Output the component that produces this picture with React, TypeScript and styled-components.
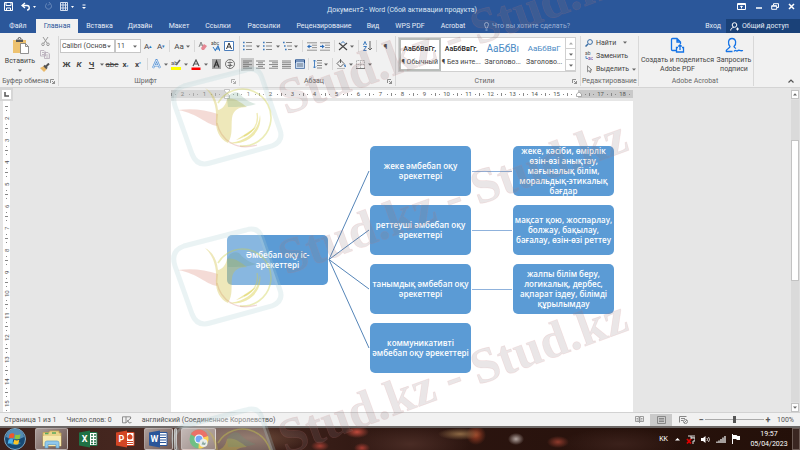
import React from "react";
import styled, { createGlobalStyle, css } from "styled-components";

const GlobalStyle = createGlobalStyle`
  * { box-sizing: border-box; }
  html, body, #root { height: 100%; }
  body { margin: 0; font-family: Roboto, "Open Sans", sans-serif; font-size: 7px; color: #444; }
  button, input, select { font: inherit; color: inherit; margin: 0; padding: 0; border: 0; background: none; }
  svg { display: block; flex: none; }
`;

/* ---------- frame ---------- */
const Window = styled.div`
  position: relative;
  height: 100vh;
  display: flex;
  flex-direction: column;
  overflow: hidden;
  background: #e6e6e6;
`;
const TitleBar = styled.header`
  display: flex;
  align-items: center;
  height: 19px;
  background: #2b579a;
  color: #fff;
`;
const QuickTools = styled.div`
  flex: 1;
  display: flex;
  align-items: center;
  gap: 8px;
  padding: 0 4px;
  margin-top: -6px;
`;
const Title = styled.h1`
  margin: 0;
  font-size: 7px;
  line-height: 12px;
  font-weight: 400;
  color: #dfe7f3;
`;
const WindowTools = styled.div`
  flex: 1;
  display: flex;
  align-items: center;
  justify-content: flex-end;
  gap: 8px;
  padding-right: 4px;
  margin-top: -6px;
`;
const PlainButton = styled.button`
  display: flex;
  align-items: center;
  justify-content: center;
`;
const TabBar = styled.nav`
  display: flex;
  height: 14px;
  background: #2b579a;
  color: #e6edf7;
`;
const Tab = styled.button<{ $active?: boolean; $w: number }>`
  width: ${(p) => p.$w}px;
  line-height: 14px;
  white-space: nowrap;
  ${(p) => p.$active && css`background: #f1f1f1; color: #2b579a;`}
`;
const TellMe = styled.label`
  flex: 1;
  display: flex;
  align-items: center;
  gap: 3px;
  padding-left: 9px;
  color: #b4c6e2;
`;
const TellInput = styled.input`
  width: 90px;
  line-height: 12px;
  outline: none;
  &::placeholder { color: #9db3d6; opacity: 1; }
`;
const Share = styled.button`
  display: flex;
  align-items: center;
  gap: 3px;
  width: 74px;
  padding-left: 4px;
  background: #1a4178;
  white-space: nowrap;
`;

/* ---------- ribbon ---------- */
const Ribbon = styled.section`
  display: flex;
  height: 55px;
  background: #f1f1f1;
  border-bottom: 1px solid #d4d4d4;
`;
const Group = styled.div<{ $w: number }>`
  flex: none;
  width: ${(p) => p.$w}px;
  margin: 3px 0 1px;
  display: flex;
  flex-direction: column;
  border-right: 1px solid #d8d8d8;
`;
const GroupBody = styled.div<{ $row?: boolean }>`
  flex: 1;
  min-height: 0;
  display: flex;
  flex-direction: ${(p) => (p.$row ? "row" : "column")};
`;
const GroupLabel = styled.div`
  display: flex;
  align-items: center;
  height: 10px;
  padding: 0 3px 0 1px;
  color: #666;
  white-space: nowrap;
  span { flex: 1; text-align: center; }
`;
const ToolRow = styled.div`
  display: flex;
  align-items: center;
  height: 14px;
  margin-top: 3px;
  padding-left: 1px;
  & + & { margin-top: 4px; }
`;
const Tool = styled.button<{ $w: number; $on?: boolean }>`
  flex: none;
  width: ${(p) => p.$w}px;
  height: 13px;
  display: flex;
  align-items: center;
  justify-content: center;
  font-size: 8px;
  line-height: 13px;
  background: ${(p) => (p.$on ? "#c8c8c8" : "none")};
  sub, sup { font-size: 5px; line-height: 0; color: #2b73b8; }
`;
const Bar = styled.span<{ $w: number }>`
  flex: none;
  width: ${(p) => p.$w}px;
  height: 12px;
  background: linear-gradient(#d8d8d8, #d8d8d8) center / 1px 100% no-repeat;
`;
const Combo = styled.div<{ $w: number }>`
  flex: none;
  display: flex;
  align-items: center;
  width: ${(p) => p.$w}px;
  height: 14px;
  padding-right: 3px;
  background: #fff;
  border: 1px solid #c6c6c6;
  select {
    flex: 1;
    min-width: 0;
    padding-left: 1px;
    appearance: none;
    outline: none;
    text-overflow: clip;
    line-height: 12px;
  }
`;
const Clipboard = styled.div`
  display: flex;
  flex-direction: column;
  justify-content: space-between;
  align-items: center;
  padding: 1px 0 4px;
`;
const BigButton = styled.button<{ $w: number }>`
  flex: none;
  width: ${(p) => p.$w}px;
  display: flex;
  flex-direction: column;
  align-items: center;
  gap: 3px;
  line-height: 9px;
  white-space: nowrap;
`;
const Gallery = styled.div`
  display: flex;
  height: 35px;
  margin: 1px 4px 0 2px;
  border: 1px solid #d0d0d0;
  background: #fff;
`;
const StyleCard = styled.button<{ $on?: boolean; $heading?: number }>`
  flex: 1;
  min-width: 0;
  display: flex;
  flex-direction: column;
  justify-content: space-around;
  align-items: center;
  padding: 2px 0;
  border: 2px solid ${(p) => (p.$on ? "#b8bcb9" : "transparent")};
  white-space: nowrap;
  line-height: 12px;
  strong {
    font-size: ${(p) => p.$heading ?? 7}px;
    font-weight: ${(p) => (p.$heading ? 400 : 500)};
    line-height: 14px;
    color: ${(p) => (p.$heading ? "#4a8ac4" : "#222")};
  }
`;
const GallerySteps = styled.div`
  width: 10px;
  display: grid;
  grid-template-rows: repeat(3, 1fr);
  border-left: 1px solid #d0d0d0;
  button { display: grid; place-items: center; border-bottom: 1px solid #d0d0d0; }
`;
const LineButton = styled.button`
  display: flex;
  align-items: center;
  gap: 3px;
  height: 14px;
  padding-left: 4px;
  white-space: nowrap;
`;
const RibbonEnd = styled.div`
  flex: 1;
  display: flex;
  align-items: flex-end;
  justify-content: flex-end;
  padding: 0 6px 4px 0;
`;

/* ---------- document ---------- */
const Workspace = styled.main`
  flex: 1;
  min-height: 0;
  display: grid;
  grid-template-columns: 13px 1fr 9px;
  grid-template-rows: 13px 1fr;
`;
const Corner = styled.div`
  display: grid;
  place-items: center;
  background: #d6d6d6;
  button { width: 9px; height: 9px; display: grid; place-items: center; background: #fff; }
`;
const RulerArea = styled.div`
  display: flex;
  justify-content: center;
  padding-top: 2px;
`;
const Ruler = styled.div`
  display: flex;
  width: 462px;
  height: 8px;
`;
const HCell = styled.div<{ $bg: string }>`
  flex: 1;
  display: flex;
  align-items: center;
  justify-content: space-between;
  background: ${(p) => p.$bg};
  font-size: 6px;
  line-height: 8px;
  color: #555;
  b { width: 6px; display: flex; justify-content: center; font-weight: 400; }
`;
const Tick = styled.i<{ $w: number; $h: number }>`
  flex: none;
  width: ${(p) => p.$w}px;
  height: ${(p) => p.$h}px;
  background: #888;
`;
const VRuler = styled.div`
  display: flex;
  flex-direction: column;
  width: 7px;
  margin-left: 3px;
  padding-top: 5px;
  min-height: 0;
  overflow: hidden;
  background: #fff;
`;
const VCell = styled.div`
  flex: none;
  height: 22px;
  display: flex;
  flex-direction: column;
  align-items: center;
  justify-content: space-between;
  font-size: 6px;
  line-height: 7px;
  color: #555;
  b { height: 6px; display: flex; justify-content: center; font-weight: 400; writing-mode: vertical-rl; rotate: 180deg; }
`;
const Canvas = styled.div`
  display: flex;
  justify-content: center;
  min-height: 0;
  overflow: hidden;
`;
const Page = styled.article`
  width: 462px;
  padding: 45px 18px 0 56px;
  background: #fff;
`;
const Diagram = styled.div`
  display: grid;
  grid-template-columns: 101px 42px 101px 42px 101px;
  align-items: center;
`;
const Column = styled.div`
  display: flex;
  flex-direction: column;
  align-self: start;
  gap: 9px;
`;
const Node = styled.div`
  height: 50px;
  display: flex;
  align-items: center;
  justify-content: center;
  text-align: center;
  border-radius: 5px;
  background: #5b9bd5;
  color: #fff;
  font: 600 8px/10px "Open Sans", "Noto Sans", sans-serif;
  white-space: pre-line;
`;
const Scroll = styled.div`
  grid-row: 1 / 3;
  grid-column: 3;
  display: flex;
  flex-direction: column;
  gap: 1px;
  padding: 2px 1px 0 0;
  background: #e0e0e0;
  button { height: 9px; display: grid; place-items: center; background: #fff; border: 1px solid #c3c3c3; }
`;
const ScrollTrack = styled.div`
  flex: 1;
  padding-top: 40px;
  background: #dadada;
`;
const ScrollThumb = styled.div`
  height: 54%;
  background: #fff;
  border: 1px solid #c3c3c3;
`;

/* ---------- status bar and taskbar ---------- */
const StatusBar = styled.footer`
  display: flex;
  align-items: center;
  height: 14px;
  padding: 0 6px 0 4px;
  background: #f1f1f1;
  border-top: 1px solid #d2d2d2;
  color: #555;
  white-space: nowrap;
`;
const StatusInfo = styled.div`
  flex: 1;
  display: flex;
  align-items: center;
  gap: 10px;
`;
const ViewButton = styled.button<{ $on?: boolean }>`
  width: 22px;
  height: 12px;
  display: grid;
  place-items: center;
  background: ${(p) => (p.$on ? "#cacaca" : "none")};
`;
const ZoomTools = styled.div`
  display: flex;
  align-items: center;
  margin-left: 3px;
  > button { width: 8px; line-height: 10px; font-size: 9px; font-weight: 700; }
  output { width: 22px; text-align: right; }
`;
const Slider = styled.input`
  appearance: none;
  width: 59px;
  height: 8px;
  background: linear-gradient(#aaa, #aaa) center / 100% 1px no-repeat;
  &::-webkit-slider-thumb { appearance: none; width: 3px; height: 7px; background: #555; }
`;
const TaskBar = styled.footer`
  display: flex;
  align-items: center;
  height: 24px;
  border-top: 2px solid #6d6866;
  color: #fff;
  background:
    radial-gradient(ellipse 12px 6px at 357px 4px, #c04a3c, transparent),
    radial-gradient(ellipse 9px 5px at 320px 18px, #a33e33, transparent),
    radial-gradient(ellipse 8px 5px at 362px 20px, #a73c32, transparent),
    radial-gradient(ellipse 22px 6px at 460px 6px, #8c6844, transparent),
    radial-gradient(ellipse 10px 10px at 476px 7px, #a14025, transparent),
    radial-gradient(ellipse 8px 6px at 516px 11px, #b3a5a0, transparent),
    radial-gradient(ellipse 11px 6px at 558px 14px, #8e3a2c, transparent),
    radial-gradient(ellipse 60px 20px at 410px 16px, #4a2c25, transparent),
    radial-gradient(ellipse 60px 14px at 250px 10px, #6c4a39, transparent),
    radial-gradient(ellipse 60px 16px at 620px 16px, #3b211b, transparent),
    linear-gradient(90deg, #3d211b, #4a2a22 25%, #2c1510 50%, #241009);
`;
const Apps = styled.div`
  flex: 1;
  display: flex;
  align-items: center;
  padding-left: 4px;
`;
const AppButton = styled.button<{ $w: number; $gap: number; $on?: boolean }>`
  width: ${(p) => p.$w}px;
  height: 22px;
  margin-left: ${(p) => p.$gap}px;
  display: grid;
  place-items: center;
  ${(p) =>
    p.$on &&
    css`
      background: linear-gradient(135deg, #ffffff8c, #ffffff38);
      border: 1px solid #ffffff66;
      border-radius: 2px;
    `}
`;
const Tray = styled.div`
  display: flex;
  align-items: center;
  gap: 5px;
`;
const Clock = styled.time`
  width: 46px;
  text-align: center;
  line-height: 10px;
`;
const Peek = styled.button`
  width: 8px;
  height: 22px;
  border: 1px solid #6b5a54;
  background: #3a2621;
`;

/* ---------- watermark ---------- */
const Watermark = styled.svg`
  position: absolute;
  top: 0;
  left: 0;
  pointer-events: none;
`;

/* ---------- small drawings ---------- */
const Ico = ({ w, h, children, c = "#555" }: { w: number; h: number; children: React.ReactNode; c?: string }) => (
  <svg width={w} height={h} viewBox={`0 0 ${w} ${h}`} fill="none" stroke={c} strokeWidth={1} aria-hidden="true">
    {children}
  </svg>
);
const Caret = ({ c = "#666" }: { c?: string }) => (
  <Ico w={4} h={3}><path d="M0 .5h4L2 2.7z" fill={c} stroke="none" /></Ico>
);
const CaretUp = ({ c = "#666" }: { c?: string }) => (
  <Ico w={4} h={3}><path d="M0 2.6h4L2 .3z" fill={c} stroke="none" /></Ico>
);
const Launcher = () => (
  <Ico w={5} h={5} c="#777"><path d="M.5 4V.5H4M2 2l2.5 2.5M4.500 2v2.500H2" strokeWidth=".8" /></Ico>
);
const Lines = ({ rows }: { rows: [number, number][] }) => (
  <Ico w={9} h={9} c="#777">
    {rows.map(([a, b], i) => <path key={i} d={`M${a} ${1 + i * 1.8}H${b}`} strokeWidth=".9" />)}
  </Ico>
);
const Bullets = ({ step = 0 }: { step?: number }) => (
  <Ico w={9} h={10}>
    {[1.5, 5, 8.5].map((y, i) => (
      <g key={y}>
        <path d={`M${i * step} ${y}h1.600`} stroke="#3a78bd" strokeWidth="1.6" />
        <path d={`M${3 + i * step} ${y}H9`} stroke="#888" />
      </g>
    ))}
  </Ico>
);
const Indent = ({ right }: { right?: boolean }) => (
  <Ico w={10} h={9}>
    <path d="M0 .8h10M5 3.200h5M5 5.600h5M0 8.200h10" stroke="#888" strokeWidth=".9" />
    <path d={right ? "M0 4.400h2.500" : "M2 4.400h2.500"} stroke="#2b6cb8" strokeWidth="1.200" />
    <path d={right ? "M4.600 4.400 2 2.400v4z" : "M0 4.400l2.600-2v4z"} fill="#2b6cb8" stroke="none" />
  </Ico>
);

const Logo = ({ y }: { y: number }) => (
  <g transform={`translate(170 ${y})`}>
    <path
      d="M14 21 76 5q12-4 16 8l18 52q4 11-8 16L40 98q-13 4-18-9L5 41Q0 26 14 21z"
      fill="#fff" fillOpacity=".28" stroke="#a9cdd2" strokeOpacity=".24" strokeWidth="5"
    />
    <g fill="none" strokeOpacity=".4">
      <path d="M48 38a28.500 28.500 0 1 1 22 43" stroke="#cdd04a" strokeWidth="1.600" />
      <path d="M47 58c4 18 20 28 40 22" stroke="#df9b9b" strokeWidth="1.300" />
      <path d="M87 48c2 10-3 18-13 23" stroke="#d9ce46" strokeWidth="1.300" />
    </g>
    <path d="M90 50c3 17-13 31-32 28 15-1 30-9 32-28zM86 62c-5 7-12 11-20 13" fill="#d9ce46" fillOpacity=".45" />
    <path d="M8 45c15-2 27 0 40 4l-1 12C35 59 29 49 8 45z" fill="#dd8f80" fillOpacity=".32" />
    <path d="M35 23c8 4 12 12 13 22 5-1 8-6 9-11 7-2 13 3 20 8-8 0-14 3-15 11-1 9 1 17-4 25-9-4-13-14-12-25 1-12-4-24-11-30z" fill="#d0c040" fillOpacity=".36" />
    <path d="M57 34c2-5 7-8 12-6 5 6 10 9 17 11-8 3-18 3-28 3z" fill="#5e9c79" fillOpacity=".22" />
  </g>
);

const cm = Array.from({ length: 21 }, (_, i) => i - 2);
const vcm = Array.from({ length: 14 }, (_, i) => i + 2);
const tabs: [string, number][] = [
  ["Файл", 36], ["Главная", 42], ["Вставка", 43], ["Дизайн", 38], ["Макет", 40], ["Ссылки", 38],
  ["Рассылки", 54], ["Рецензирование", 66], ["Вид", 32], ["WPS PDF", 42], ["Acrobat", 44],
];
const cellBg = (k: number) => {
  if (k < 0 || k > 16) return "#c9c9c9";
  if (k === 0) return "linear-gradient(90deg, #c9c9c9 50%, #fff 50%)";
  if (k === 16) return "linear-gradient(90deg, #fff 50%, #c9c9c9 50%)";
  return "#fff";
};
const groups = [
  "жеке әмбебап оқу\nәрекеттері",
  "реттеуші әмбебап оқу\nәрекеттері",
  "танымдық әмбебап оқу\nәрекеттері",
  "коммуникативті\nәмбебап оқу әрекеттері",
];
const details = [
  "жеке, кәсіби, өмірлік\nөзін-өзі анықтау,\nмағыналық білім,\nморальдық-этикалық\nбағдар",
  "мақсат қою, жоспарлау,\nболжау, бақылау,\nбағалау, өзін-өзі реттеу",
  "жалпы білім беру,\nлогикалық, дербес,\nақпарат іздеу, білімді\nқұрылымдау",
];

const Office = ({ c, l }: { c: string; l: string }) => (
  <svg width="19" height="18" viewBox="0 0 19 18" aria-hidden="true">
    <path d="M9 2.500h9v13H9z" fill="#fff" stroke={c} />
    {l === "X" && <path d="M12 5h2M15 5h2M12 8h2M15 8h2M12 11h2M15 11h2M12 13.500h2M15 13.500h2" stroke={c} strokeWidth="1.500" />}
    {l === "W" && <path d="M11 5h6M11 7.500h6M11 10h6M11 12.500h6" stroke={c} />}
    {l === "P" && <><circle cx="14" cy="7" r="2.500" fill={c} /><path d="M14 7V4M11 11.500h6M11 13.500h6" stroke={c} /></>}
    <path d="M0 2.500 11 .5v17L0 15.500z" fill={c} />
    <text x="5.500" y="12" fontSize="9" fontWeight="700" fill="#fff" textAnchor="middle">{l}</text>
  </svg>
);

export default function App() {
  return (
    <Window>
      <GlobalStyle />
      <TitleBar>
        <QuickTools>
          <PlainButton aria-label="Сохранить">
            <Ico w={9} h={9} c="#fff"><path d="M.5.5h8v8h-8zM2 .5v3h5v-3M2.500 8.500V6h4v2.500" /></Ico>
          </PlainButton>
          <PlainButton aria-label="Отменить">
            <Ico w={15} h={9} c="#fff"><path d="M4 1 1 3.500 4 6M1.500 3.500H6c3 0 3 4.500 0 4.500" strokeWidth="1.400" /><path d="M12 4h3l-1.500 2z" fill="#fff" stroke="none" /></Ico>
          </PlainButton>
          <PlainButton aria-label="Повторить">
            <Ico w={8} h={9} c="#6a8abc"><path d="M3 1.500a3 3 0 1 0 3 0M4 3.500l2-2L5 0" /></Ico>
          </PlainButton>
          <PlainButton aria-label="Таблица">
            <Ico w={14} h={10} c="#d6e0f0"><path d="M.5.5h7v8h-7zM.5 3h7M.5 6h7M3 .5v8M5.500.5v8" /><path d="M11 4h3l-1.500 2z" fill="#fff" stroke="none" /></Ico>
          </PlainButton>
          <PlainButton aria-label="Настройка панели">
            <Ico w={4} h={6} c="#fff"><path d="M.5 1h3" /><path d="M0 3h4L2 5z" fill="#fff" stroke="none" /></Ico>
          </PlainButton>
        </QuickTools>
        <Title>Документ2 - Word (Сбой активации продукта)</Title>
        <WindowTools>
          <PlainButton aria-label="Параметры ленты">
            <Ico w={9} h={7} c="#fff"><path d="M.5.5h8v6h-8zM.5 1.500h8M4.500 5.500V3M3.300 4l1.200-1.200L5.700 4" /></Ico>
          </PlainButton>
          <PlainButton aria-label="Свернуть"><Ico w={9} h={7} c="#fff"><path d="M2 5h6" strokeWidth="1.500" /></Ico></PlainButton>
          <PlainButton aria-label="Окно"><Ico w={8} h={7} c="#fff"><path d="M2.500 2V.7h5v3.800H6M.7 2.700h5v3.600h-5zM.7 3.200h5" /></Ico></PlainButton>
          <PlainButton aria-label="Закрыть"><Ico w={9} h={7} c="#fff"><path d="M2 1l5 5M7 1 2 6" strokeWidth="1.500" /></Ico></PlainButton>
        </WindowTools>
      </TitleBar>
      <TabBar>
        {tabs.map(([name, w]) => <Tab key={name} $w={w} $active={name === "Главная"}>{name}</Tab>)}
        <TellMe>
          <Ico w={5} h={9} c="#b4c6e2"><path d="M1.700 6C1.700 4.500.5 4 .5 2.500a2 2 0 0 1 4 0C4.500 4 3.300 4.500 3.300 6zM1.500 8h2" strokeWidth=".8" /></Ico>
          <TellInput aria-label="Помощник" placeholder="Что вы хотите сделать?" />
        </TellMe>
        <Tab $w={26}>Вход</Tab>
        <Share>
          <Ico w={9} h={9} c="#fff"><circle cx="4.500" cy="3" r="2.300" /><path d="M.7 8.500c0-2 1.500-3 3-3M6 7h3M7.500 5.500v3" /></Ico>
          Общий доступ
        </Share>
      </TabBar>

      <Ribbon>
        <Group $w={59}>
          <GroupBody $row>
            <BigButton $w={40}>
              <Ico w={17} h={18}>
                <path d="M1 4h13v13H1z" fill="#edc270" stroke="none" />
                <path d="M4 3.500h7V6H4z" fill="#555" stroke="none" /><path d="M6 3a1.500 1.500 0 0 1 3 0" />
                <path d="M8.500 7.500h5l3 3v7h-8zM13.500 7.500v3h3" fill="#fff" stroke="#777" strokeWidth=".8" />
              </Ico>
              Вставить
              <Caret />
            </BigButton>
            <Clipboard>
              <PlainButton aria-label="Вырезать"><Ico w={9} h={9} c="#999"><path d="M2 0l4 6M7 0 3 6" /><circle cx="2" cy="7.300" r="1.300" /><circle cx="7" cy="7.300" r="1.300" /></Ico></PlainButton>
              <PlainButton aria-label="Копировать"><Ico w={10} h={9} c="#b5a9b7"><path d="M.5.5H4l1.500 1.500v4h-5zM4.500 2.500H8L9.500 4v4.500h-5zM6 5h2.500M6 7h2.500M2 2.500h2M2 4.500h2" strokeWidth=".8" /></Ico></PlainButton>
              <PlainButton aria-label="Формат по образцу"><Ico w={10} h={9}><path d="M0 5l4-2 3 3-3 3z" fill="#e9b96a" stroke="none" /><path d="M4 2.500 7 5.500M6 3.500 9 .5" stroke="#555" strokeWidth="2" /></Ico></PlainButton>
            </Clipboard>
          </GroupBody>
          <GroupLabel><span>Буфер обмена</span><Launcher /></GroupLabel>
        </Group>

        <Group $w={181}>
          <GroupBody>
            <ToolRow>
              <Combo $w={55}><select aria-label="Шрифт"><option>Calibri (Основ</option></select><Caret /></Combo>
              <Combo $w={26}><select aria-label="Размер"><option>11</option></select><Caret /></Combo>
              <Tool $w={14}>A<sup>▴</sup></Tool>
              <Tool $w={12}>A<sup>▾</sup></Tool>
              <Bar $w={5} />
              <Tool $w={20}>Aa&nbsp;<Caret /></Tool>
              <Bar $w={4} />
              <Tool $w={13} aria-label="Очистить формат">
                <Ico w={9} h={10}><path d="M1 6 3 1l2 5M2 4h2.500" stroke="#888" /><path d="M3 7l3-4 3 2-3 4H4z" fill="#e58793" stroke="none" /></Ico>
              </Tool>
              <Tool $w={13} aria-label="Фонетика">
                <Ico w={9} h={11}><text x="0" y="4" fontSize="5" fill="#444" stroke="none">abc</text><path d="M4 10l3-5 2 5M5 8h3.500" stroke="#2f78c4" strokeWidth="1.200" /><path d="M2 6l2 3" stroke="#2f78c4" /></Ico>
              </Tool>
              <Tool $w={13} aria-label="Граница знака">
                <Ico w={10} h={10}><path d="M.5.5h9v9h-9z" stroke="#4a7dbb" fill="#fff" /><path d="M2.500 8 5 2l2.500 6M3.500 6h3" stroke="#333" /></Ico>
              </Tool>
            </ToolRow>
            <ToolRow>
              <Tool $w={13}><b>Ж</b></Tool>
              <Tool $w={12}><b><i>К</i></b></Tool>
              <Tool $w={13}><b><u>Ч</u></b></Tool>
              <Tool $w={7} aria-label="Подчеркивание"><Caret /></Tool>
              <Tool $w={14}><s>abc</s></Tool>
              <Tool $w={13}><b>x</b><sub>₂</sub></Tool>
              <Tool $w={12}><b>x</b><sup>²</sup></Tool>
              <Bar $w={6} />
              <Tool $w={12} aria-label="Эффекты"><Ico w={9} h={10}><path d="M1 9 4.500 1 8 9M2.500 6.500h4" stroke="#5b95d5" strokeWidth="2.200" /><path d="M1 9 4.500 1 8 9M2.500 6.500h4" stroke="#fff" strokeWidth=".7" /></Ico></Tool>
              <Tool $w={7} aria-label="Список эффектов"><Caret /></Tool>
              <Tool $w={13} aria-label="Цвет выделения"><Ico w={10} h={11}><path d="M0 8h10v3H0z" fill="#ff0" stroke="none" /><text x="0" y="6" fontSize="6" fill="#555" stroke="none">ab</text><path d="M5 6 9 1" stroke="#666" strokeWidth="1.500" /></Ico></Tool>
              <Tool $w={7} aria-label="Список цветов"><Caret /></Tool>
              <Tool $w={14} aria-label="Цвет текста"><Ico w={10} h={11}><path d="M.5 8.500h9v2.500h-9z" fill="#f00" stroke="none" /><path d="M2 7 5 1l3 6M3 5h4" stroke="#555" strokeWidth="1.200" /></Ico></Tool>
              <Tool $w={6} aria-label="Цвета текста"><Caret /></Tool>
              <Tool $w={14} aria-label="Затенение"><Ico w={9} h={10}><path d="M0 0h9v10H0z" fill="#a5a5a5" stroke="none" /><path d="M2 8.500 4.500 2 7 8.500M3 6h3" stroke="#333" strokeWidth="1.200" /></Ico></Tool>
              <Tool $w={13} aria-label="Знак в круге"><Ico w={10} h={10}><circle cx="5" cy="5" r="4.500" strokeWidth=".8" /><path d="M5 1.500v1M2.500 3.500h5M3.500 5H6L5 6.500V8H4M2.500 6.500h5" strokeWidth=".8" /></Ico></Tool>
            </ToolRow>
          </GroupBody>
          <GroupLabel><span>Шрифт</span><Launcher /></GroupLabel>
        </Group>

        <Group $w={156}>
          <GroupBody>
            <ToolRow>
              <Tool $w={13} aria-label="Маркеры"><Bullets /></Tool><Tool $w={7} aria-label="Виды маркеров"><Caret /></Tool>
              <Tool $w={13} aria-label="Нумерация"><Bullets /></Tool><Tool $w={7} aria-label="Виды нумерации"><Caret /></Tool>
              <Tool $w={12} aria-label="Многоуровневый список"><Bullets step={1} /></Tool><Tool $w={6} aria-label="Виды списков"><Caret /></Tool>
              <Bar $w={6} />
              <Tool $w={13} aria-label="Уменьшить отступ"><Indent /></Tool>
              <Tool $w={13} aria-label="Увеличить отступ"><Indent right /></Tool>
              <Bar $w={6} />
              <Tool $w={12} aria-label="Азиатская верстка"><Ico w={10} h={10}><path d="M1 2l8 7M9 2 1 9" stroke="#444" strokeWidth="1.100" /><path d="M3 2.500 5 .5l2 2" stroke="#3a78bd" /></Ico></Tool>
              <Tool $w={6} aria-label="Виды верстки"><Caret /></Tool>
              <Bar $w={6} />
              <Tool $w={13} aria-label="Сортировка"><Ico w={9} h={10}><path d="M.5 4 2 .5 3.500 4M.5 5.500h3L.5 9.500h3" stroke="#3a78bd" /><path d="M7 0v9M5 7l2 2 2-2" stroke="#666" /></Ico></Tool>
              <Bar $w={5} />
              <Tool $w={13}>¶</Tool>
            </ToolRow>
            <ToolRow>
              <Tool $w={13} $on aria-label="По левому краю"><Lines rows={[[0, 9], [0, 6], [0, 9], [0, 6], [0, 9]]} /></Tool>
              <Tool $w={13} aria-label="По центру"><Lines rows={[[0, 9], [2, 7], [0, 9], [2, 7], [0, 9]]} /></Tool>
              <Tool $w={13} aria-label="По правому краю"><Lines rows={[[0, 9], [3, 9], [0, 9], [3, 9], [0, 9]]} /></Tool>
              <Tool $w={13} aria-label="По ширине"><Lines rows={[[0, 9], [0, 9], [0, 9], [0, 9], [0, 9]]} /></Tool>
              <Tool $w={13} aria-label="Распределенное"><Ico w={10} h={10} c="#555"><path d="M.5.5h9v9h-9z" fill="#c7d8ee" stroke="#6585b0" /><path d="M.5 1v3M9.500 1v3M1 2h8" stroke="#28508a" /><path d="M2 5h6M2 7h6" stroke="#678" /></Ico></Tool>
              <Bar $w={5} />
              <Tool $w={12} aria-label="Интервал"><Ico w={9} h={10}><path d="M4 1.500h5M4 4h5M4 6.500h5M4 9h5" stroke="#888" /><path d="M1.500 1v8M0 2.500 1.500 1 3 2.500M0 7.500 1.500 9 3 7.500" stroke="#3a78bd" strokeWidth=".9" /></Ico></Tool>
              <Tool $w={6} aria-label="Интервалы"><Caret /></Tool>
              <Bar $w={6} />
              <Tool $w={12} aria-label="Заливка"><Ico w={10} h={10}><path d="M1 4.500 4.500 1 8 4.500 4.500 8zM4.500 4V0" strokeWidth=".9" /><path d="M8.500 5.500 9.500 8" stroke="#3a78bd" strokeWidth="1.500" /><path d="M1 9.500h8" stroke="#bbb" /></Ico></Tool>
              <Tool $w={7} aria-label="Цвета заливки"><Caret /></Tool>
              <Tool $w={13} aria-label="Границы"><Ico w={9} h={9} c="#aaa"><path d="M.5.5h8v8h-8zM4.500.5v8M.5 4.500h8" strokeDasharray="1 .6" /><path d="M0 8.500h9" stroke="#777" /></Ico></Tool>
              <Tool $w={6} aria-label="Виды границ"><Caret /></Tool>
            </ToolRow>
          </GroupBody>
          <GroupLabel><span>Абзац</span><Launcher /></GroupLabel>
        </Group>

        <Group $w={185}>
          <GroupBody>
            <Gallery>
              <StyleCard $on><strong>АаБбВвГг,</strong>¶ Обычный</StyleCard>
              <StyleCard><strong>АаБбВвГг,</strong>¶ Без инте...</StyleCard>
              <StyleCard $heading={10}><strong>АаБбВı</strong>Заголово...</StyleCard>
              <StyleCard $heading={8}><strong>АаБбВвГ</strong>Заголово...</StyleCard>
              <GallerySteps>
                <button aria-label="Вверх"><CaretUp c="#aaa" /></button>
                <button aria-label="Вниз"><Caret /></button>
                <button aria-label="Все стили"><Caret /></button>
              </GallerySteps>
            </Gallery>
          </GroupBody>
          <GroupLabel><span>Стили</span><Launcher /></GroupLabel>
        </Group>

        <Group $w={58}>
          <GroupBody>
            <LineButton><Ico w={8} h={8} c="#3a6ea5"><circle cx="5" cy="3" r="2.400" /><path d="M3 5 .5 7.500" strokeWidth="1.500" /></Ico>Найти&nbsp;&nbsp;<Caret /></LineButton>
            <LineButton><Ico w={8} h={9}><text x="0" y="4" fontSize="5" fill="#555" stroke="none">ab</text><text x="3" y="9" fontSize="5" fill="#7146a3" stroke="none">ac</text><path d="M1 5v2.500h2" stroke="#3a78bd" strokeWidth=".8" /></Ico>Заменить</LineButton>
            <LineButton><Ico w={8} h={8} c="#777"><path d="M2.500.8v6l1.500-1.300 1 2 1-.5-1-2h2z" strokeWidth=".8" /></Ico>Выделить<Caret /></LineButton>
          </GroupBody>
          <GroupLabel><span>Редактирование</span></GroupLabel>
        </Group>

        <Group $w={115}>
          <GroupBody $row>
            <BigButton $w={77}>
              <Ico w={15} h={17} c="#1473e6"><path d="M6 14.500H2.500q-1 0-1-1v-10q0-1 1-1H7l3.500 3.500v2M7 2.500V6h3.500M8 11.500H6.500V16h7v-4.500H12M10 14V9M8.300 10.500 10 8.800l1.700 1.700" strokeWidth="1.300" /></Ico>
              <span>Создать и поделиться<br />Adobe PDF</span>
            </BigButton>
            <BigButton $w={36}>
              <Ico w={19} h={17} c="#1473e6"><path d="M1 15.500h6.500M1 15.500c0-3 4-3 4-5C3 9 2.500 2.500 7 2.500s4.500 6 2 8c0 1 1 1.500 2 2M9 15.500c2-3 2 1 4-1 1-1 2 1 5 0" strokeWidth="1.300" /></Ico>
              <span>Запросить<br />подписи</span>
            </BigButton>
          </GroupBody>
          <GroupLabel><span>Adobe Acrobat</span></GroupLabel>
        </Group>
        <RibbonEnd><PlainButton aria-label="Свернуть ленту"><Ico w={6} h={4}><path d="M.5 3.500 3 1l2.500 2.500" strokeWidth="1.200" /></Ico></PlainButton></RibbonEnd>
      </Ribbon>

      <Workspace>
        <Corner><button aria-label="Табуляция"><Ico w={5} h={5}><path d="M1 0v4h4" strokeWidth="1.500" /></Ico></button></Corner>
        <RulerArea>
          <Ruler>
            {cm.map((k) => (
              <HCell key={k} $bg={cellBg(k)}>
                <Tick $w={1} $h={3} /><Tick $w={1} $h={1} />
                <b>
                  {k === 0 ? (
                    <Ico w={6} h={10} c="#999"><path d="M.5.500h5v1.500L3 4.500.5 2zM3 4.500l2.500 2v3h-5v-3zM.5 7h5" fill="#fff" strokeWidth=".8" /></Ico>
                  ) : k === 16 ? (
                    <Ico w={6} h={6} c="#999"><path d="M.5 5.500V3L3 1l2.500 2v2.500z" fill="#fff" strokeWidth=".8" /></Ico>
                  ) : Math.abs(k)}
                </b>
                <Tick $w={1} $h={1} /><span />
              </HCell>
            ))}
          </Ruler>
        </RulerArea>
        <Scroll>
          <button aria-label="Прокрутить вверх"><CaretUp /></button>
          <ScrollTrack><ScrollThumb /></ScrollTrack>
          <button aria-label="Прокрутить вниз"><Caret /></button>
        </Scroll>
        <VRuler>
          {vcm.map((k) => (
            <VCell key={k}><Tick $w={3} $h={1} /><Tick $w={1} $h={1} /><b>{k}</b><Tick $w={1} $h={1} /><span /></VCell>
          ))}
        </VRuler>
        <Canvas>
          <Page>
            <Diagram>
              <Node>{"Әмбебап оқу іс-\nәрекеттері"}</Node>
              <Ico w={42} h={227} c="#5585b8">
                <path d="M1 113.500 41 25M1 113.500 41 84M1 113.500 41 143M1 113.500 41 202" />
              </Ico>
              <Column>{groups.map((t) => <Node key={t}>{t}</Node>)}</Column>
              <Ico w={42} h={227} c="#8fb2dc"><path d="M1 25.500h40M1 84.500h40M1 143.500h40" /></Ico>
              <Column>{details.map((t) => <Node key={t}>{t}</Node>)}</Column>
            </Diagram>
          </Page>
        </Canvas>
      </Workspace>

      <StatusBar>
        <StatusInfo>
          <span>Страница 1 из 1</span>
          <span>Число слов: 0</span>
          <Ico w={10} h={8} c="#777"><path d="M.5.8h3.500v6H.5zM4 .8h4.500v2M4 6.800l5-5M5.500 4l1.500 3 2.500-.5" strokeWidth=".8" /></Ico>
          <span>английский (Соединенное Королевство)</span>
        </StatusInfo>
        <ViewButton aria-label="Режим чтения"><Ico w={9} h={7} c="#888"><path d="M.5.500h3.500v5H.500zM5 .5h3.500v5H5zM4.500.5v6.500M1.500 2.500h1.500M6 2.500h1.500M1.500 4h1.500M6 4h1.500" strokeWidth=".8" /></Ico></ViewButton>
        <ViewButton $on aria-label="Разметка страницы"><Ico w={9} h={8} c="#888"><path d="M.5.5h8v7h-8zM2 2.500h5M2 4h5M2 5.500h5" /></Ico></ViewButton>
        <ViewButton aria-label="Веб-документ"><Ico w={9} h={8} c="#888"><path d="M.5 6.500v-6h7M2 2.500h4M2 4.500h2" /><circle cx="6.500" cy="5.500" r="2" /><path d="M5 7l3-3" /></Ico></ViewButton>
        <ZoomTools>
          <button aria-label="Уменьшить">−</button>
          <Slider type="range" aria-label="Масштаб" min={0} max={200} defaultValue={100} />
          <button aria-label="Увеличить">+</button>
          <output>100%</output>
        </ZoomTools>
      </StatusBar>

      <TaskBar>
        <Apps>
          <AppButton $w={22} $gap={0} aria-label="Пуск">
            <svg width="22" height="22" viewBox="0 0 22 22">
              <circle cx="11" cy="11" r="10.500" fill="#174a75" stroke="#7fa9c5" />
              <path d="M2 9a9 8 0 0 1 18 0q-9 5-18 0z" fill="#6fa8cf" fillOpacity=".7" />
              <path d="M5 15a8 6 0 0 0 12 0q-6-3-12 0z" fill="#40b7e8" fillOpacity=".6" />
              <path d="M5.500 6.500q2.500-2 5-.6l-1 4.300q-2.500-1-4.800.3z" fill="#f0582b" />
              <path d="M11.500 6.500q2.500 1.200 5-.2l-1 4.500q-2.500 1.200-5-.2z" fill="#8cc63e" />
              <path d="M4.500 11.700q2.500-1.500 4.800-.3l-1 4.200q-2.300-1-4.600.2z" fill="#4ab2ec" />
              <path d="M10.300 11.800q2.500 1.200 5 0l-1 4.200q-2.500 1.200-5-.2z" fill="#fdc525" />
            </svg>
          </AppButton>
          <AppButton $w={33} $gap={9} $on aria-label="Проводник">
            <svg width="20" height="19" viewBox="0 0 20 19">
              <path d="M1 5V2.500h6L8 1h9v2h2v13H1z" fill="#e9d28a" stroke="#c5a651" strokeWidth=".8" />
              <path d="M3 3.500h3.500M10 3h4" stroke="#59a95c" strokeWidth="1.500" />
              <path d="M1 6h18v10H1z" fill="#f7e9ad" />
              <path d="M3 18v-5q0-2 2-2h10q2 0 2 2v5h-3v-3.500H6V18z" fill="#8fc8ec" stroke="#609dc8" strokeWidth=".7" />
            </svg>
          </AppButton>
          <AppButton $w={30} $gap={5} aria-label="Excel"><Office c="#1f7145" l="X" /></AppButton>
          <AppButton $w={30} $gap={7} aria-label="PowerPoint"><Office c="#d24625" l="P" /></AppButton>
          <AppButton $w={29} $gap={4} $on aria-label="Word"><Office c="#2a5599" l="W" /></AppButton>
          <AppButton $w={3} $gap={1} $on aria-label="Окна Word" />
          <AppButton $w={35} $gap={4} $on aria-label="Chrome">
            <svg width="20" height="20" viewBox="0 0 20 20">
              <circle cx="10" cy="10" r="9.500" fill="#3aa757" />
              <path d="M10 10 1.800 5.200A9.500 9.500 0 0 1 18.200 5.200L19 8z" fill="#e33b2e" />
              <path d="M10 10l9-3A9.500 9.500 0 0 1 9.500 19.500z" fill="#fbc116" />
              <circle cx="10" cy="10" r="4.500" fill="#fff" /><circle cx="10" cy="10" r="3.500" fill="#4285f4" />
              <circle cx="14.500" cy="14" r="4" fill="#e2e8e4" /><path d="M12.500 15.500 14 12l1 2 2-.5-1 2.500z" fill="#628b80" />
            </svg>
          </AppButton>
        </Apps>
        <Tray>
          <span>KK</span>
          <PlainButton aria-label="Скрытые значки"><Ico w={8} h={4}><path d="M2 3.500h5L4.500 1z" fill="#fff" stroke="none" /></Ico></PlainButton>
          <Ico w={9} h={11} c="#ddd"><path d="M2 2h3v3M6 1v3M8 1v3M5 4h4v3H7v3" /><path d="M1 5l4 4.500M5 5 1 9.500" stroke="#e00000" strokeWidth="1.800" /></Ico>
          <Ico w={11} h={9} c="#fff"><path d="M1 3h2l2.500-2v7L3 6H1z" fill="#fff" stroke="none" /><path d="M7 3q1 1.500 0 3M8.500 2q2 2.500 0 5" strokeWidth=".8" /></Ico>
          <Ico w={10} h={8} c="#ddd"><path d="M1 8V6.500M3 8V5.500M5 8V4M7 8V2.500M9 8V1" strokeWidth="1.400" /></Ico>
          <Ico w={10} h={10} c="#fff"><path d="M1.500 0v10" /><path d="M2 1h3.500l1 1H9v4H6l-1-1H2z" fill="#fff" stroke="none" /></Ico>
          <Clock>19:57<br />05/04/2023</Clock>
        </Tray>
        <Peek aria-label="Показать рабочий стол" />
      </TaskBar>

      <Watermark width="800" height="450" viewBox="0 0 800 450">
        <Logo y={65} />
        <Logo y={225} />
        <Logo y={405} />
        <g fill="#8a7478" fillOpacity=".18" stroke="#e08080" strokeOpacity=".15" strokeWidth=".7" fontFamily="Liberation Serif, serif" fontWeight="700" fontSize="50">
          {[115, 275, 455].map((y) => (
            <text key={y} transform={`translate(286 ${y}) rotate(-20)`}>Stud.kz - Stud.kz</text>
          ))}
        </g>
      </Watermark>
    </Window>
  );
}
